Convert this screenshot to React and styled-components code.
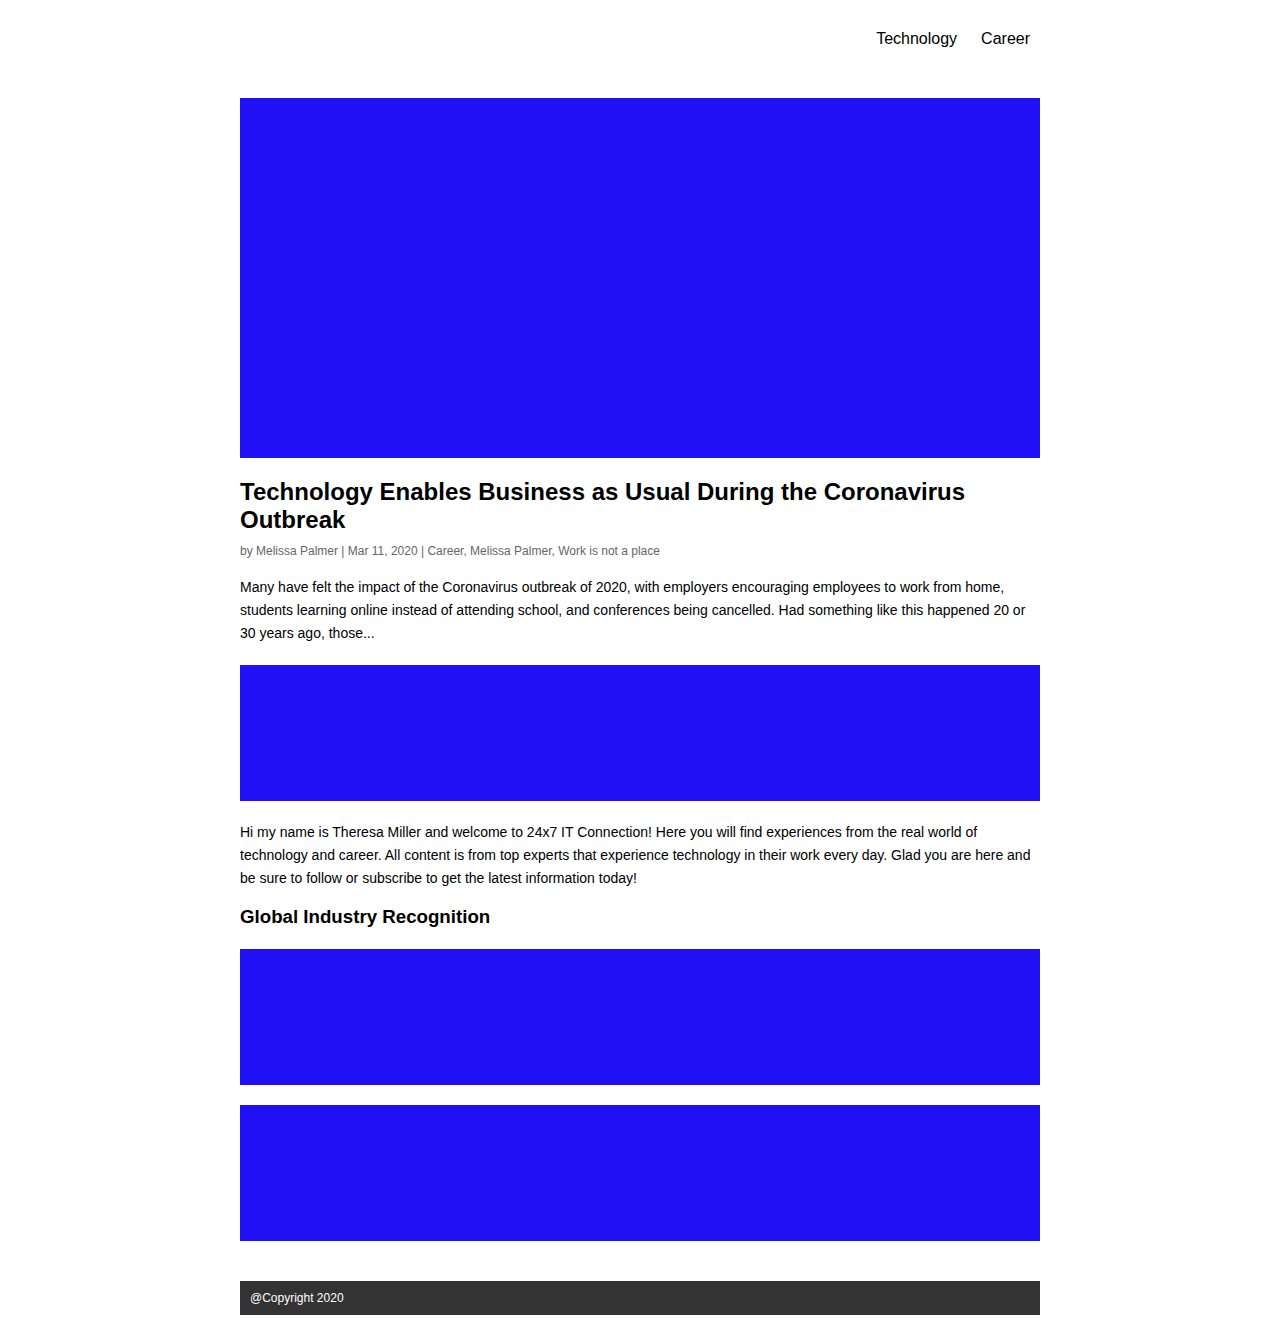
import * as React from "react";
import styled, { createGlobalStyle } from "styled-components";

const GlobalStyle = createGlobalStyle`
  html, body {
    margin: 0;
    padding: 0;
    background: #ffffff;
    font-family: "Liberation Sans", Arial, sans-serif;
    color: #000;
  }
`;

const Page = styled.div`
  width: 800px;
  margin: 0 auto;
  padding-bottom: 20px;
`;

const Header = styled.header`
  display: flex;
  justify-content: flex-end;
  padding: 29px 10px 27px 0;
`;

const Nav = styled.nav`
  display: flex;
  gap: 24px;
`;

const NavLink = styled.a`
  font-size: 16px;
  line-height: 20px;
  color: #000;
  text-decoration: none;
`;

const Main = styled.main`
  display: flex;
  flex-direction: column;
  padding-top: 22px;
`;

const Picture = styled.div`
  width: 100%;
  height: ${(p) => p.$height}px;
  background: #2010f6;
  margin-top: ${(p) => p.$gap || 0}px;
`;

const Title = styled.h1`
  margin: 20px 0 0;
  font-size: 24px;
  line-height: 28px;
  font-weight: 700;
`;

const Meta = styled.div`
  margin-top: 9px;
  font-size: 12px;
  line-height: 16px;
  color: #666;
`;

const Text = styled.p`
  margin: ${(p) => p.$gap}px 0 0;
  font-size: 14px;
  line-height: 23px;
`;

const SubHeading = styled.h2`
  margin: 16px 0 0;
  font-size: 18.7px;
  line-height: 22px;
  font-weight: 700;
`;

const Footer = styled.footer`
  margin-top: 40px;
  height: 34px;
  display: flex;
  align-items: center;
  padding: 0 10px;
  background: #333333;
  color: #fff;
  font-size: 12px;
`;

export default function App() {
  return (
    <>
      <GlobalStyle />
      <Page>
        <Header>
          <Nav>
            <NavLink href="#">Technology</NavLink>
            <NavLink href="#">Career</NavLink>
          </Nav>
        </Header>

        <Main>
          <Picture $height={360} />
          <Title>Technology Enables Business as Usual During the Coronavirus Outbreak</Title>
          <Meta>by Melissa Palmer | Mar 11, 2020 | Career, Melissa Palmer, Work is not a place</Meta>
          <Text $gap={17}>
            Many have felt the impact of the Coronavirus outbreak of 2020, with employers encouraging
            employees to work from home, students learning online instead of attending school, and
            conferences being cancelled. Had something like this happened 20 or 30 years ago, those...
          </Text>

          <Picture $height={136} $gap={20} />

          <Text $gap={20}>
            Hi my name is Theresa Miller and welcome to 24x7 IT Connection! Here you will find
            experiences from the real world of technology and career. All content is from top experts
            that experience technology in their work every day. Glad you are here and be sure to
            follow or subscribe to get the latest information today!
          </Text>

          <SubHeading>Global Industry Recognition</SubHeading>

          <Picture $height={136} $gap={21} />
          <Picture $height={136} $gap={20} />
        </Main>

        <Footer>@Copyright 2020</Footer>
      </Page>
    </>
  );
}
